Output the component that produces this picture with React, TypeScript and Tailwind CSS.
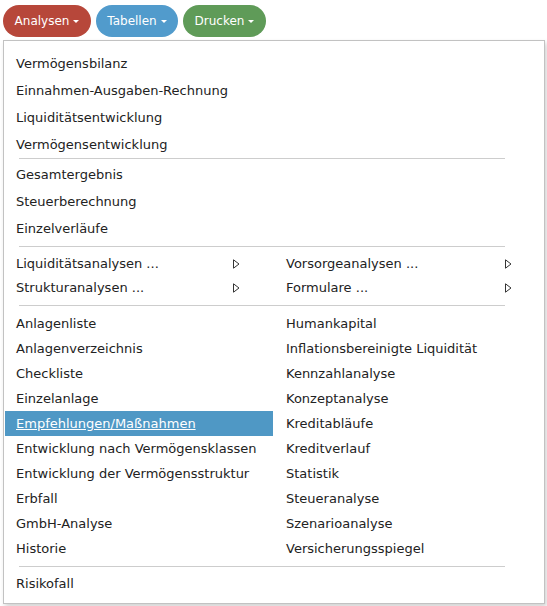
import React from "react";

type Item = { label: string; arrow?: boolean; active?: boolean };

const topItems = [
  "Vermögensbilanz",
  "Einnahmen-Ausgaben-Rechnung",
  "Liquiditätsentwicklung",
  "Vermögensentwicklung",
];

const resultItems = ["Gesamtergebnis", "Steuerberechnung", "Einzelverläufe"];

const subMenus: [Item, Item][] = [
  [
    { label: "Liquiditätsanalysen ...", arrow: true },
    { label: "Vorsorgeanalysen ...", arrow: true },
  ],
  [
    { label: "Strukturanalysen ...", arrow: true },
    { label: "Formulare ...", arrow: true },
  ],
];

const reports: [Item, Item][] = [
  [{ label: "Anlagenliste" }, { label: "Humankapital" }],
  [{ label: "Anlagenverzeichnis" }, { label: "Inflationsbereinigte Liquidität" }],
  [{ label: "Checkliste" }, { label: "Kennzahlanalyse" }],
  [{ label: "Einzelanlage" }, { label: "Konzeptanalyse" }],
  [{ label: "Empfehlungen/Maßnahmen", active: true }, { label: "Kreditabläufe" }],
  [{ label: "Entwicklung nach Vermögensklassen" }, { label: "Kreditverlauf" }],
  [{ label: "Entwicklung der Vermögensstruktur" }, { label: "Statistik" }],
  [{ label: "Erbfall" }, { label: "Steueranalyse" }],
  [{ label: "GmbH-Analyse" }, { label: "Szenarioanalyse" }],
  [{ label: "Historie" }, { label: "Versicherungsspiegel" }],
];

const Caret = () => (
  <span className="ml-[4px] inline-block h-0 w-0 border-x-[3px] border-t-[3px] border-x-transparent border-t-white" />
);

const Pill = ({ label, color, width }: { label: string; color: string; width: string }) => (
  <button
    type="button"
    className={`flex h-[32px] items-center justify-center rounded-full text-[12px] text-white ${color} ${width}`}
  >
    {label}
    <Caret />
  </button>
);

const Arrow = () => (
  <svg width="7" height="10" viewBox="0 0 7 10" className="shrink-0">
    <path d="M0.5 0.8 L6 5 L0.5 9.2 Z" fill="none" stroke="#333" strokeWidth="1" />
  </svg>
);

const Divider = ({ className }: { className: string }) => (
  <div className={`ml-[14px] h-px w-[486px] bg-[#cdcdcd] ${className}`} />
);

const Cell = ({ item, right, height }: { item: Item; right: boolean; height: string }) => (
  <div
    className={`flex items-center justify-between ${height} ${right ? "pl-[13px] pr-[31px]" : "pl-[11px] pr-[33px]"} ${
      item.active ? "bg-[#4f98c5] text-white underline" : ""
    }`}
  >
    <span className="whitespace-nowrap">{item.label}</span>
    {item.arrow && <Arrow />}
  </div>
);

export default function App() {
  return (
    <div className="h-[606px] w-[547px] overflow-hidden bg-white font-['DejaVu_Sans',sans-serif] text-[13px] text-[#222]">
      <div className="flex gap-[5px] pl-[3px] pt-[5px]">
        <Pill label="Analysen" color="bg-[#b7473a]" width="w-[88px]" />
        <Pill label="Tabellen" color="bg-[#519bcc]" width="w-[82px]" />
        <Pill label="Drucken" color="bg-[#5f9b58]" width="w-[83px]" />
      </div>

      <div className="ml-[3px] mt-[3px] w-[542px] border border-[#c2c2c2] px-px pb-[8px] pt-[9px] shadow-[2px_3px_5px_rgba(0,0,0,0.18)]">
        {topItems.map((label) => (
          <div key={label} className="flex h-[27px] items-center pl-[11px]">
            {label}
          </div>
        ))}
        <Divider className="mb-[2px]" />
        {resultItems.map((label) => (
          <div key={label} className="flex h-[27px] items-center pl-[11px]">
            {label}
          </div>
        ))}
        <Divider className="mb-[5px] mt-[4px]" />
        <div className="grid grid-cols-[268px_270px]">
          {subMenus.map(([l, r]) => (
            <React.Fragment key={l.label}>
              <Cell item={l} right={false} height="h-[24px]" />
              <Cell item={r} right height="h-[24px]" />
            </React.Fragment>
          ))}
        </div>
        <Divider className="mb-[5px] mt-[5px]" />
        <div className="grid grid-cols-[268px_270px]">
          {reports.map(([l, r]) => (
            <React.Fragment key={l.label}>
              <Cell item={l} right={false} height="h-[25px]" />
              <Cell item={r} right height="h-[25px]" />
            </React.Fragment>
          ))}
        </div>
        <Divider className="mb-[5px] mt-[5px]" />
        <div className="flex h-[23px] items-center pl-[11px]">Risikofall</div>
      </div>
    </div>
  );
}
